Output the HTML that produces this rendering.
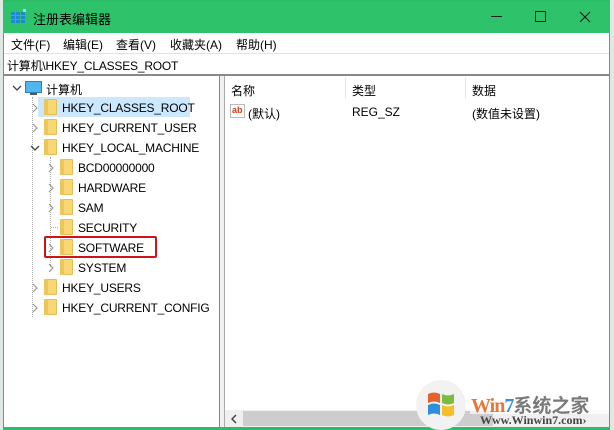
<!DOCTYPE html>
<html><head><meta charset="utf-8"><style>
*{margin:0;padding:0;box-sizing:border-box}
body{width:614px;height:430px;overflow:hidden;background:#dfe8e4;font-family:"Liberation Sans","Noto Sans CJK SC",sans-serif;font-size:12px;color:#000;position:relative}
.a{position:absolute;white-space:nowrap}
.t{letter-spacing:-0.2px}
.win{position:absolute;left:3px;top:0;width:607px;height:430px;background:#2dbd68}
.title{position:absolute;left:3px;top:2px;width:607px;height:31px;background:#2ec36b}
.menu{position:absolute;left:4px;top:33px;width:605px;height:20px;background:#fff}
.addr{position:absolute;left:4px;top:53px;width:605px;height:22px;background:#fff;border-bottom:1px solid #8a8a8a;border-top:1px solid #e3e3e3}
.tree{position:absolute;left:4px;top:76px;width:216px;height:351px;background:#fff;border-right:1px solid #888}
.split{position:absolute;left:220px;top:76px;width:4px;height:351px;background:#f0f0f0}
.list{position:absolute;left:224px;top:76px;width:385px;height:351px;background:#fff;border-left:1px solid #aaa}
.fold{position:absolute;width:13px;height:16px;background:#f8d775;border:1px solid #e6bd52;border-radius:1px}
.fold:before{content:"";position:absolute;left:-1px;top:-1px;width:4px;height:16px;background:#eec55a}
.r{position:absolute;width:6px;height:10px}
.d{position:absolute;width:10px;height:6px}
</style></head><body>
<div class="win"></div>
<div class="title"></div>
<svg class="a" style="left:11px;top:9px" width="16" height="16"><g fill="#1e88d6"><rect x="0" y="3" width="4" height="3"/><rect x="5" y="3" width="4" height="3"/><rect x="10" y="3" width="4" height="3"/><rect x="0" y="7" width="4" height="3"/><rect x="5" y="7" width="4" height="3"/><rect x="10" y="7" width="4" height="3"/><rect x="0" y="11" width="4" height="3"/><rect x="5" y="11" width="4" height="3"/><rect x="10" y="11" width="4" height="3"/></g><rect x="12" y="0" width="3" height="3" fill="#9fd4f5"/></svg>
<div class="a" style="left:33px;top:9px;font-size:13px">注册表编辑器</div>
<div class="a" style="left:491px;top:16px;width:11px;height:1px;background:#222"></div>
<div class="a" style="left:535px;top:11px;width:11px;height:11px;border:1px solid #222"></div>
<svg class="a" style="left:579px;top:11px" width="12" height="12"><path d="M1 1L11 11M11 1L1 11" stroke="#222" stroke-width="1.2"/></svg>
<div class="menu"></div>
<div class="a" style="left:11px;top:36px">文件(F)</div>
<div class="a" style="left:63px;top:36px">编辑(E)</div>
<div class="a" style="left:116px;top:36px">查看(V)</div>
<div class="a" style="left:170px;top:36px">收藏夹(A)</div>
<div class="a" style="left:236px;top:36px">帮助(H)</div>
<div class="addr"></div>
<div class="a t" style="left:7px;top:57px">计算机\HKEY_CLASSES_ROOT</div>
<div class="tree"></div>
<div class="split"></div>
<div class="list"></div>
<div class="a" style="left:38px;top:97px;width:152px;height:20px;background:#cce8ff"></div>
<svg class="d" style="left:12px;top:85px"><path d="M1 1L5 5L9 1" stroke="#444" fill="none" stroke-width="1.3"/></svg>
<div class="a" style="left:25px;top:81px;width:17px;height:12px;background:#4fb6ee;border:1px solid #2d7fc0"></div>
<div class="a" style="left:30px;top:93px;width:7px;height:2px;background:#555"></div>
<div class="a" style="left:46px;top:81px">计算机</div>
<div class="a" style="left:32px;top:97px;border-left:1px dotted #aaa;height:220px"></div>
<svg class="r" style="left:32px;top:103px"><path d="M1 1L5 5L1 9" stroke="#999" fill="none" stroke-width="1.2"/></svg><div class="fold" style="left:44px;top:99px"></div><div class="a t" style="left:62px;top:101px">HKEY_CLASSES_ROOT</div>
<svg class="r" style="left:32px;top:123px"><path d="M1 1L5 5L1 9" stroke="#999" fill="none" stroke-width="1.2"/></svg><div class="fold" style="left:44px;top:119px"></div><div class="a t" style="left:62px;top:121px">HKEY_CURRENT_USER</div>
<svg class="d" style="left:30px;top:145px"><path d="M1 1L5 5L9 1" stroke="#444" fill="none" stroke-width="1.3"/></svg><div class="fold" style="left:44px;top:139px"></div><div class="a t" style="left:62px;top:141px">HKEY_LOCAL_MACHINE</div>
<div class="a" style="left:50px;top:157px;border-left:1px dotted #aaa;height:110px"></div>
<svg class="r" style="left:48px;top:163px"><path d="M1 1L5 5L1 9" stroke="#999" fill="none" stroke-width="1.2"/></svg><div class="fold" style="left:60px;top:159px"></div><div class="a t" style="left:78px;top:161px">BCD00000000</div>
<svg class="r" style="left:48px;top:183px"><path d="M1 1L5 5L1 9" stroke="#999" fill="none" stroke-width="1.2"/></svg><div class="fold" style="left:60px;top:179px"></div><div class="a t" style="left:78px;top:181px">HARDWARE</div>
<svg class="r" style="left:48px;top:203px"><path d="M1 1L5 5L1 9" stroke="#999" fill="none" stroke-width="1.2"/></svg><div class="fold" style="left:60px;top:199px"></div><div class="a t" style="left:78px;top:201px">SAM</div>
<div class="a" style="left:51px;top:227px;width:7px;border-top:1px dotted #aaa"></div><div class="fold" style="left:60px;top:219px"></div><div class="a t" style="left:78px;top:221px">SECURITY</div>
<svg class="r" style="left:48px;top:243px"><path d="M1 1L5 5L1 9" stroke="#999" fill="none" stroke-width="1.2"/></svg><div class="fold" style="left:60px;top:239px"></div><div class="a t" style="left:78px;top:241px">SOFTWARE</div>
<svg class="r" style="left:48px;top:263px"><path d="M1 1L5 5L1 9" stroke="#999" fill="none" stroke-width="1.2"/></svg><div class="fold" style="left:60px;top:259px"></div><div class="a t" style="left:78px;top:261px">SYSTEM</div>
<svg class="r" style="left:32px;top:283px"><path d="M1 1L5 5L1 9" stroke="#999" fill="none" stroke-width="1.2"/></svg><div class="fold" style="left:44px;top:279px"></div><div class="a t" style="left:62px;top:281px">HKEY_USERS</div>
<svg class="r" style="left:32px;top:303px"><path d="M1 1L5 5L1 9" stroke="#999" fill="none" stroke-width="1.2"/></svg><div class="fold" style="left:44px;top:299px"></div><div class="a t" style="left:62px;top:301px">HKEY_CURRENT_CONFIG</div>
<div class="a" style="left:44px;top:236px;width:113px;height:22px;border:2px solid #d0131b;border-radius:2px"></div>
<div class="a" style="left:231px;top:82px">名称</div>
<div class="a" style="left:345px;top:78px;width:1px;height:20px;background:#e5e5e5"></div>
<div class="a" style="left:352px;top:82px">类型</div>
<div class="a" style="left:465px;top:78px;width:1px;height:20px;background:#e5e5e5"></div>
<div class="a" style="left:472px;top:82px">数据</div>
<div class="a" style="left:230px;top:104px;width:15px;height:14px;border:1px solid #bbb;background:#fff;color:#d03a1f;font-size:9px;font-weight:bold;line-height:11px;padding-left:1px">ab</div>
<div class="a" style="left:248px;top:105px">(默认)</div>
<div class="a" style="left:352px;top:105px">REG_SZ</div>
<div class="a" style="left:472px;top:105px">(数值未设置)</div>
<div class="a" style="left:225px;top:410px;width:384px;height:17px;background:#f0f0f0"></div>
<div class="a" style="left:243px;top:411px;width:250px;height:15px;background:#cdcdcd"></div>
<svg class="r" style="left:231px;top:414px"><path d="M5 1L1 5L5 9" stroke="#444" fill="none" stroke-width="1.5"/></svg>
<div class="a" style="left:416px;top:380px;width:50px;height:50px;border-radius:50%;background:#f2f2f2"></div>
<svg class="a" style="left:426px;top:389px" width="30" height="30"><path d="M2 5q6-3 12 0v9q-6-3-12 0z" fill="#e6622b"/><path d="M16 5q6 3 12 0v9q-6 3-12 0z" fill="#7cbb3f"/><path d="M2 16q6-3 12 0v10q-6-3-12 0z" fill="#2f8fd8"/><path d="M16 16q6 3 12 0v10q-6 3-12 0z" fill="#f5bf2a"/></svg>
<div class="a" style="left:470px;top:396px;width:139px;height:18px;background:rgba(255,255,255,.7)"></div>
<div class="a" style="left:471px;top:394px;font-size:20px;font-weight:bold;font-family:'Liberation Serif',serif;color:#e8783a;letter-spacing:-1px;line-height:22px">Win<span style="color:#3a8fd8">7</span><span style="font-family:'Noto Sans CJK SC',sans-serif;font-size:19px;color:#7a7a7a;letter-spacing:0">系统之家</span></div>
<div class="a" style="left:480px;top:413px;font-size:12px;font-weight:bold;font-family:'Liberation Serif',serif;color:#444">Www.Winwin7.com›</div>
</body></html>
